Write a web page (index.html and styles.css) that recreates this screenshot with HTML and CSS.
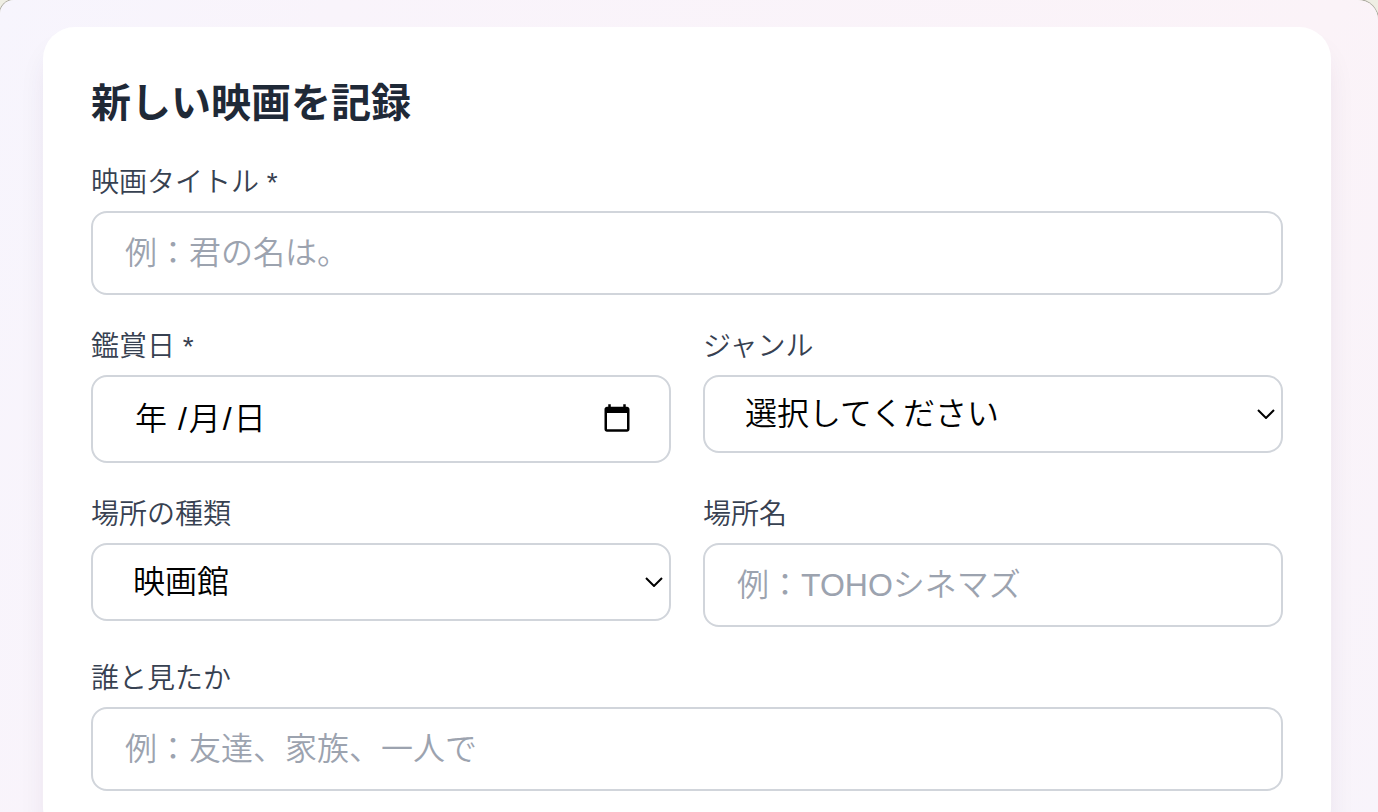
FILE: index.html
```
<!DOCTYPE html>
<html lang="ja">
<head>
    <meta charset="UTF-8">
    <meta name="viewport" content="width=device-width, initial-scale=1.0">
    <title>新しい映画を記録</title>
    <link rel="stylesheet" href="styles.css">
</head>
<body>
    <main class="page">
        <form class="card">
            <h1>新しい映画を記録</h1>

            <div class="field">
                <label for="title">映画タイトル *</label>
                <input type="text" id="title" placeholder="例：君の名は。" required>
            </div>

            <div class="row">
                <div class="field">
                    <label for="date">鑑賞日 *</label>
                    <div class="control">
                        <input type="date" id="date" required>
                        <span class="date-hint">年 <span class="slash">/</span>月<span class="slash">/</span>日</span>
                    </div>
                </div>
                <div class="field">
                    <label for="genre">ジャンル</label>
                    <div class="control">
                        <select id="genre">
                            <option>選択してください</option>
                        </select>
                        <svg class="chevron" viewBox="0 0 18 10" aria-hidden="true"><path d="M1 1l8 8 8-8"/></svg>
                    </div>
                </div>
            </div>

            <div class="row">
                <div class="field">
                    <label for="placeType">場所の種類</label>
                    <div class="control">
                        <select id="placeType">
                            <option>映画館</option>
                        </select>
                        <svg class="chevron" viewBox="0 0 18 10" aria-hidden="true"><path d="M1 1l8 8 8-8"/></svg>
                    </div>
                </div>
                <div class="field">
                    <label for="placeName">場所名</label>
                    <input type="text" id="placeName" placeholder="例：TOHOシネマズ">
                </div>
            </div>

            <div class="field">
                <label for="companion">誰と見たか</label>
                <input type="text" id="companion" placeholder="例：友達、家族、一人で">
            </div>
        </form>
    </main>
</body>
</html>
```
FILE: styles.css
```
* {
  box-sizing: border-box;
}

body {
  margin: 0;
  background-color: #efeee4;
  font-family: "Liberation Sans", "Noto Sans CJK JP", sans-serif;
  font-weight: 350;
}

.page {
  height: 100vh;
  overflow: hidden;
  padding: 27px 47px 0 43px;
  background: linear-gradient(110deg, #f7f5fd 0%, #f9f4fb 20%, #fbf3f8 80%, #f8f4fb 100%);
  border-radius: 14px 20px 0 0;
  box-shadow: 0 0 0 1px #aaa89f;
}

.card {
  display: flex;
  flex-direction: column;
  gap: 32px;
  padding: 48px;
  background-color: #ffffff;
  border-radius: 32px;
  box-shadow: 0 20px 30px -6px rgba(60, 30, 80, 0.1);
}

h1 {
  margin: 0;
  font-size: 40px;
  font-weight: 700;
  line-height: 56px;
  color: #1f2937;
}

.row {
  display: grid;
  grid-template-columns: 1fr 1fr;
  gap: 32px;
  align-items: start;
}

.field {
  display: flex;
  flex-direction: column;
  gap: 8px;
}

label {
  font-size: 28px;
  line-height: 40px;
  color: #374151;
}

input,
select {
  display: block;
  width: 100%;
  height: 84px;
  margin: 0;
  padding: 0 32px;
  border: 2px solid #d1d5db;
  border-radius: 16px;
  background-color: #ffffff;
  color: #000000;
  font-family: inherit;
  font-weight: inherit;
  font-size: 32px;
  outline: none;
}

input::placeholder {
  color: #9ca3af;
}

input:focus,
select:focus {
  border-color: #a855f7;
}

select {
  appearance: none;
  height: 78px;
  padding: 0 40px;
}

input[type="date"] {
  height: 88px;
  padding-right: 34px;
}

/* the hint stands in for the empty date */
input[type="date"]::-webkit-datetime-edit {
  opacity: 0;
}

.control {
  position: relative;
}

.date-hint {
  position: absolute;
  top: 0;
  left: 44px;
  font-size: 32px;
  line-height: 88px;
  pointer-events: none;
}

.slash {
  padding: 0 2px;
}

.chevron {
  position: absolute;
  top: 34px;
  right: 8px;
  width: 18px;
  height: 10px;
  fill: none;
  stroke: #000000;
  stroke-width: 2;
  pointer-events: none;
}
```
